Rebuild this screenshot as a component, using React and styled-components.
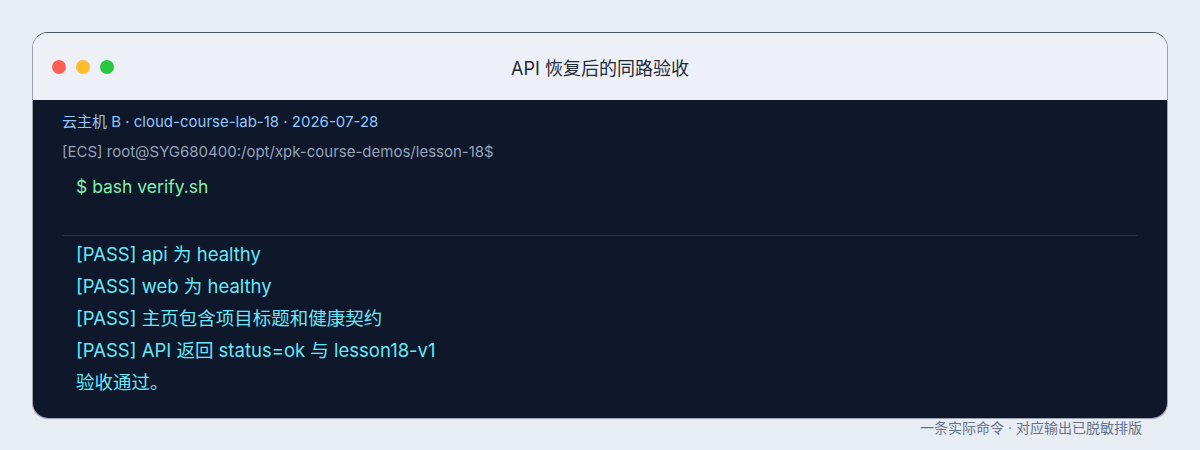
import styled, { createGlobalStyle } from "styled-components";

const GlobalStyle = createGlobalStyle`
  html, body {
    margin: 0;
    padding: 0;
    background: #e8ecf3;
  }
  body {
    font-family: Inter, "Noto Sans CJK SC", sans-serif;
  }
`;

const outputLines = [
  "[PASS] api 为 healthy",
  "[PASS] web 为 healthy",
  "[PASS] 主页包含项目标题和健康契约",
  "[PASS] API 返回 status=ok 与 lesson18-v1",
  "验收通过。",
];

function App() {
  return (
    <>
      <GlobalStyle />
      <Page>
        <Window>
          <TitleBar>
            <Dots>
              <Dot color="#ff5f57" />
              <Dot color="#febc2e" />
              <Dot color="#28c840" />
            </Dots>
            <Title>API 恢复后的同路验收</Title>
          </TitleBar>
          <Terminal>
            <Meta>云主机 B · cloud-course-lab-18 · 2026-07-28</Meta>
            <Prompt>[ECS] root@SYG680400:/opt/xpk-course-demos/lesson-18$</Prompt>
            <Command>$ bash verify.sh</Command>
            <Divider />
            <Output>
              {outputLines.map((line) => (
                <OutLine key={line}>{line}</OutLine>
              ))}
            </Output>
          </Terminal>
        </Window>
        <Caption>一条实际命令 · 对应输出已脱敏排版</Caption>
      </Page>
    </>
  );
}

export default App;

const Page = styled.div`
  padding: 32px 32px 0;
  width: 1136px;
`;

const Window = styled.div`
  border-radius: 16px;
  overflow: hidden;
  border: 1px solid #9ca3af;
  border-top-color: #4b5563;
  box-sizing: border-box;
  width: 1136px;
`;

const TitleBar = styled.div`
  position: relative;
  height: 67px;
  background: #edf1f7;
  display: flex;
  align-items: center;
  justify-content: center;
`;

const Dots = styled.div`
  position: absolute;
  left: 19px;
  top: 27px;
  display: flex;
  gap: 10px;
`;

const Dot = styled.span`
  width: 14px;
  height: 14px;
  border-radius: 50%;
  background: ${(p) => p.color};
`;

const Title = styled.div`
  font-size: 18px;
  color: #1f2937;
`;

const Terminal = styled.div`
  background: #0f172a;
  padding: 12px 29px 20px;
`;

const Meta = styled.div`
  font-size: 15px;
  line-height: 20px;
  color: #93c5fd;
`;

const Prompt = styled.div`
  margin-top: 10px;
  font-size: 15px;
  line-height: 20px;
  color: #94a3b8;
`;

const Command = styled.div`
  margin-top: 13px;
  padding-left: 14px;
  font-size: 17.5px;
  line-height: 24px;
  color: #86efac;
`;

const Divider = styled.div`
  margin-top: 36px;
  height: 1px;
  background: #263244;
`;

const Output = styled.div`
  margin-top: 2px;
  padding-left: 14px;
`;

const OutLine = styled.div`
  font-size: 18.5px;
  line-height: 32px;
  color: #67e8f9;
`;

const Caption = styled.div`
  text-align: right;
  padding-right: 26px;
  margin-top: 0;
  font-size: 14px;
  line-height: 18px;
  color: #64748b;
`;
